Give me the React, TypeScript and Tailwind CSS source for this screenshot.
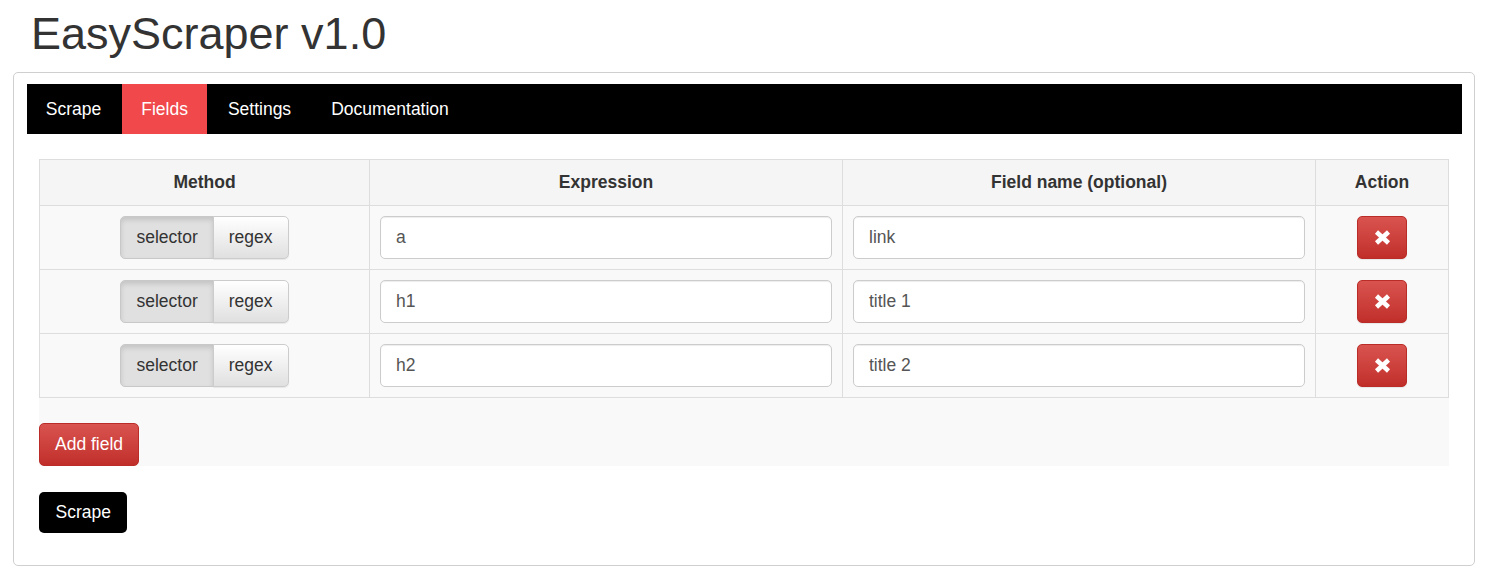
import React from "react";

type Row = { expr: string; name: string };

const rows: Row[] = [
  { expr: "a", name: "link" },
  { expr: "h1", name: "title 1" },
  { expr: "h2", name: "title 2" },
];

const tabs = ["Scrape", "Fields", "Settings", "Documentation"];

function RemoveIcon() {
  return (
    <svg width="17" height="15" viewBox="0 0 17 15" aria-hidden="true">
      <g stroke="#fff" strokeWidth="4.6" strokeLinecap="butt">
        <line x1="2.5" y1="2" x2="14.5" y2="13" />
        <line x1="14.5" y1="2" x2="2.5" y2="13" />
      </g>
    </svg>
  );
}

function MethodToggle() {
  return (
    <div className="flex">
      <button className="h-[42.5px] px-[15px] border border-[#c8c8c8] rounded-l-[5px] bg-[#e0e0e0] text-[#333] shadow-[inset_0_3px_5px_rgba(0,0,0,0.125)] leading-[25px]">
        selector
      </button>
      <button className="h-[42.5px] px-[15px] -ml-px border border-[#cccccc] rounded-r-[5px] bg-gradient-to-b from-white to-[#e0e0e0] text-[#333] shadow-[0_1px_1px_rgba(0,0,0,0.075)] leading-[25px]">
        regex
      </button>
    </div>
  );
}

function TextInput({ value }: { value: string }) {
  return (
    <div className="h-[42.5px] w-full border border-[#cccccc] rounded-[5px] bg-white px-[15px] flex items-center text-[#555] shadow-[inset_0_1px_1px_rgba(0,0,0,0.075)]">
      {value}
    </div>
  );
}

export default function App() {
  return (
    <div
      className="min-h-[588px] bg-white text-[17.5px] text-[#333]"
      style={{ fontFamily: '"Liberation Sans", Arial, sans-serif' }}
    >
      <h1 className="mt-[9px] mb-[13.5px] pl-[31px] text-[45px] leading-[49.5px] font-normal text-[#333]">
        EasyScraper v1.0
      </h1>

      <div className="ml-[13px] w-[1462px] border border-[#cfcfcf] rounded-[5px] pt-[11px] pl-[13px] pr-[12px] pb-[32px]">
        <nav className="flex h-[50px] bg-black gap-[2.5px]">
          {tabs.map((t) => (
            <div
              key={t}
              className={
                "px-[18.75px] py-[12.5px] leading-[25px] text-white " +
                (t === "Fields" ? "bg-[#f0484b]" : "")
              }
            >
              {t}
            </div>
          ))}
        </nav>

        <div className="mt-[25px] ml-[12px] w-[1410px] bg-[#f9f9f9]">
          <div className="grid grid-cols-[330px_473px_473px_133px] border-l border-t border-[#dddddd]">
            {["Method", "Expression", "Field name (optional)", "Action"].map((h) => (
              <div
                key={h}
                className="h-[46px] bg-[#f5f5f5] border-r border-b border-[#dddddd] flex items-center justify-center font-bold"
              >
                {h}
              </div>
            ))}
            {rows.map((r, i) => (
              <React.Fragment key={i}>
                <div className="h-[64px] border-r border-b border-[#dddddd] flex items-center justify-center">
                  <MethodToggle />
                </div>
                <div className="h-[64px] border-r border-b border-[#dddddd] flex items-center px-[10px]">
                  <TextInput value={r.expr} />
                </div>
                <div className="h-[64px] border-r border-b border-[#dddddd] flex items-center px-[10px]">
                  <TextInput value={r.name} />
                </div>
                <div className="h-[64px] border-r border-b border-[#dddddd] flex items-center justify-center">
                  <button className="w-[50px] h-[43px] rounded-[5px] border border-[#b92c28] bg-gradient-to-b from-[#d9534f] to-[#c12e2a] flex items-center justify-center shadow-[0_1px_1px_rgba(0,0,0,0.075)]">
                    <RemoveIcon />
                  </button>
                </div>
              </React.Fragment>
            ))}
          </div>
          <div className="pt-[25px]">
            <button className="h-[42.5px] px-[15px] rounded-[5px] border border-[#b92c28] bg-gradient-to-b from-[#d9534f] to-[#c12e2a] text-white leading-[25px]">
              Add field
            </button>
          </div>
        </div>

        <div className="mt-[26px] ml-[12px]">
          <button className="h-[41.5px] px-[16.5px] rounded-[5px] bg-black text-white leading-[25px]">
            Scrape
          </button>
        </div>
      </div>
    </div>
  );
}
